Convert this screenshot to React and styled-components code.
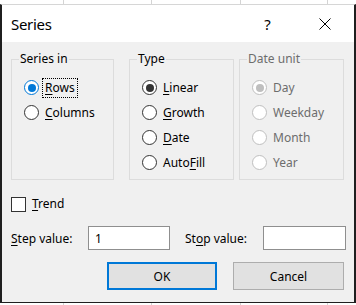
import React from 'react';
import styled, { createGlobalStyle, css } from 'styled-components';

const Global = createGlobalStyle`
  html, body { margin: 0; padding: 0; }
  body {
    width: 356px;
    height: 305px;
    overflow: hidden;
    font-family: "Noto Sans", "Segoe UI", sans-serif;
    font-size: 12px;
    color: #000;
    background-color: #fff;
    background-image:
      linear-gradient(#d4d4d4, #d4d4d4),
      linear-gradient(#d4d4d4, #d4d4d4),
      linear-gradient(#d4d4d4, #d4d4d4),
      linear-gradient(#d4d4d4, #d4d4d4);
    background-size: 1px 100%;
    background-position: 63px 0, 151px 0, 240px 0, 327px 0;
    background-repeat: no-repeat;
  }
`;

const Page = styled.div`
  padding-top: 4px;
`;

const Dialog = styled.div`
  width: 356px;
  box-sizing: border-box;
  border-left: 2px solid #1f1f1f;
  border-right: 2px solid #1f1f1f;
  border-top: 1px solid #d6d6d6;
  border-bottom: 1px solid #1f1f1f;
`;

const TitleBar = styled.div`
  height: 37px;
  background: #fff;
  display: flex;
  align-items: center;
  padding-left: 9px;
`;

const Title = styled.div`
  flex: 1;
  font-size: 15px;
  letter-spacing: -0.3px;
`;

const TitleButton = styled.div`
  width: ${p => p.$w}px;
  height: 37px;
  display: flex;
  align-items: center;
  justify-content: center;
  font-size: 15px;
`;

const Body = styled.div`
  background: #f0f0f0;
  height: 260px;
  box-sizing: border-box;
  padding: 9px 0 0 9px;
`;

const GroupsRow = styled.div`
  display: flex;
  align-items: flex-start;
`;

const Group = styled.fieldset`
  box-sizing: border-box;
  width: ${p => p.$w}px;
  height: 129px;
  margin: 0 0 0 ${p => p.$ml || 0}px;
  padding: 8px 7px 0 7px;
  border: 1px solid #dcdcdc;
  min-width: 0;
`;

const Legend = styled.legend`
  padding: 0 1px;
  line-height: 16px;
  color: ${p => (p.$disabled ? '#6d6d6d' : '#000')};
`;

const RadioList = styled.div`
  margin-left: 5px;
  display: flex;
  flex-direction: column;
`;

const RadioRow = styled.div`
  height: 25px;
  display: flex;
  align-items: center;
`;

const RadioCircle = styled.span`
  box-sizing: border-box;
  width: 15px;
  height: 15px;
  border-radius: 50%;
  background: #fff;
  border: 1px solid ${p => p.$color};
  display: flex;
  align-items: center;
  justify-content: center;
  flex: none;
  &::after {
    content: '';
    width: 8px;
    height: 8px;
    border-radius: 50%;
    background: ${p => (p.$checked ? p.$color : 'transparent')};
  }
`;

const Label = styled.span`
  margin-left: 3px;
  padding: 1px 2px;
  line-height: 16px;
  border: 1px ${p => (p.$focused ? 'dotted #000' : 'solid transparent')};
  color: ${p => (p.$disabled ? '#6d6d6d' : '#000')};
  white-space: nowrap;
`;

const CheckRow = styled.div`
  margin-top: 16px;
  height: 16px;
  display: flex;
  align-items: center;
`;

const CheckBox = styled.span`
  box-sizing: border-box;
  width: 15px;
  height: 15px;
  border: 1px solid #333;
  background: #fff;
  flex: none;
`;

const ValueRow = styled.div`
  margin-top: 14px;
  height: 24px;
  display: flex;
  align-items: center;
`;

const FieldLabel = styled.span`
  width: ${p => p.$w}px;
  margin-left: ${p => p.$ml || 0}px;
  white-space: nowrap;
`;

const TextBox = styled.div`
  box-sizing: border-box;
  width: ${p => p.$w}px;
  height: 24px;
  border: 1px solid #8f8f8f;
  background: #fff;
  padding: 0 6px;
  display: flex;
  align-items: center;
`;

const ButtonRow = styled.div`
  margin-top: 12px;
  display: flex;
  justify-content: flex-end;
  gap: 16px;
  padding-right: 10px;
`;

const Button = styled.div`
  box-sizing: border-box;
  width: ${p => p.$w}px;
  height: 28px;
  background: #e1e1e1;
  display: flex;
  align-items: center;
  justify-content: center;
  ${p =>
    p.$default
      ? css`border: 2px solid #0078d7;`
      : css`border: 1px solid #adadad;`}
`;

const U = styled.u`
  text-decoration-thickness: 1px;
  text-underline-offset: 2px;
`;

function Radio({ checked, focused, disabled, color, children }) {
  const c = color || (disabled ? '#bfbfbf' : '#333');
  return (
    <RadioRow>
      <RadioCircle $checked={checked} $color={c} />
      <Label $focused={focused} $disabled={disabled}>{children}</Label>
    </RadioRow>
  );
}

export default function App() {
  return (
    <Page>
      <Global />
      <Dialog>
        <TitleBar>
          <Title>Series</Title>
          <TitleButton $w={57}>?</TitleButton>
          <TitleButton $w={58}>
            <svg width="12" height="12" viewBox="0 0 12 12">
              <path d="M0.5 0.5 L11.5 11.5 M11.5 0.5 L0.5 11.5" stroke="#000" strokeWidth="1" fill="none" />
            </svg>
          </TitleButton>
        </TitleBar>
        <Body>
          <GroupsRow>
            <Group $w={103}>
              <Legend>Series in</Legend>
              <RadioList>
                <Radio checked focused color="#0078d7"><U>R</U>ows</Radio>
                <Radio><U>C</U>olumns</Radio>
              </RadioList>
            </Group>
            <Group $w={105} $ml={15}>
              <Legend>Type</Legend>
              <RadioList>
                <Radio checked><U>L</U>inear</Radio>
                <Radio><U>G</U>rowth</Radio>
                <Radio><U>D</U>ate</Radio>
                <Radio>Auto<U>F</U>ill</Radio>
              </RadioList>
            </Group>
            <Group $w={105} $ml={5}>
              <Legend $disabled>Date unit</Legend>
              <RadioList>
                <Radio checked disabled>Day</Radio>
                <Radio disabled>Weekday</Radio>
                <Radio disabled>Month</Radio>
                <Radio disabled>Year</Radio>
              </RadioList>
            </Group>
          </GroupsRow>
          <CheckRow>
            <CheckBox />
            <Label><U>T</U>rend</Label>
          </CheckRow>
          <ValueRow>
            <FieldLabel $w={77}><U>S</U>tep value:</FieldLabel>
            <TextBox $w={82}>1</TextBox>
            <FieldLabel $w={78} $ml={15}>St<U>o</U>p value:</FieldLabel>
            <TextBox $w={83} />
          </ValueRow>
          <ButtonRow>
            <Button $w={110} $default>OK</Button>
            <Button $w={111}>Cancel</Button>
          </ButtonRow>
        </Body>
      </Dialog>
    </Page>
  );
}
